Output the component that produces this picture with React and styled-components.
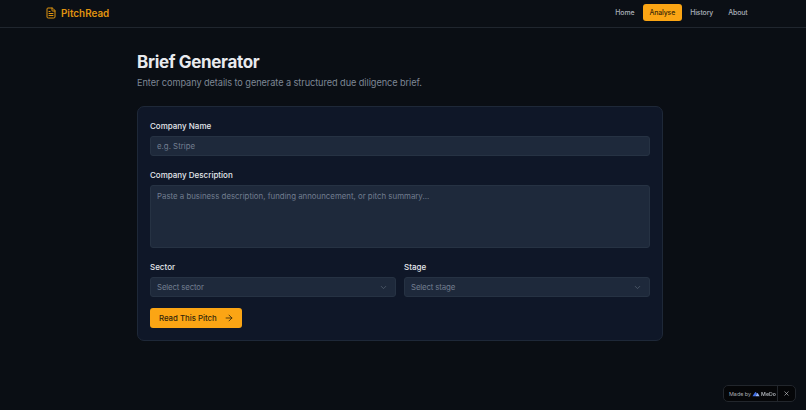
import React from "react";
import styled, { createGlobalStyle } from "styled-components";
import { FileText, ChevronDown, ArrowRight, X } from "lucide-react";

const GlobalStyle = createGlobalStyle`
  html, body {
    margin: 0;
    padding: 0;
    background: #0a0e14;
    font-family: Inter, "Noto Sans", sans-serif;
  }
  * { box-sizing: border-box; }
`;

const Page = styled.div`
  width: 806px;
  height: 410px;
  overflow: hidden;
  background: #0a0e14;
`;

const Header = styled.header`
  height: 28px;
  padding: 0 52px 2px 45px;
  display: flex;
  align-items: center;
  justify-content: space-between;
  background: #0b0f15;
  border-bottom: 1px solid #20262e;
`;

const Brand = styled.div`
  display: flex;
  align-items: center;
  gap: 4px;
  color: #e0940f;
  font-size: 9.9px;
  font-weight: 600;
`;

const Nav = styled.nav`
  display: flex;
  align-items: center;
  gap: 2px;
`;

const NavItem = styled.a`
  height: 17px;
  padding: 0 6.5px;
  display: flex;
  align-items: center;
  border-radius: 3px;
  font-size: 6.9px;
  font-weight: 500;
  letter-spacing: -0.1px;
  color: ${(p) => (p.$active ? "#3b2a08" : "#aab0ba")};
  background: ${(p) => (p.$active ? "#fba514" : "transparent")};
`;

const Main = styled.main`
  width: 526px;
  margin-left: 137px;
  padding-top: 22px;
`;

const Title = styled.h1`
  margin: 0;
  font-size: 17px;
  line-height: 24px;
  font-weight: 700;
  letter-spacing: -0.33px;
  color: #e8eaee;
`;

const Subtitle = styled.p`
  margin: 2px 0 0;
  font-size: 9.2px;
  line-height: 14px;
  letter-spacing: -0.07px;
  color: #7e8794;
`;

const Card = styled.section`
  margin-top: 16px;
  height: 235px;
  padding: 13px 12px;
  background: #0f1728;
  border: 1px solid #1e2838;
  border-radius: 7px;
`;

const Field = styled.div`
  margin-bottom: ${(p) => p.$gap ?? 13}px;
`;

const Label = styled.label`
  display: block;
  height: 12px;
  margin-bottom: 4px;
  font-size: 8px;
  line-height: 12px;
  font-weight: 500;
  color: #e4e7ec;
`;

const fieldStyles = `
  width: 100%;
  background: #1e293b;
  border: 1px solid #263243;
  border-radius: 3px;
  font-family: Inter, "Noto Sans", sans-serif;
  font-size: 7.85px;
  color: #717d8f;
  outline: none;
  &::placeholder { color: #717d8f; opacity: 1; }
`;

const TextInput = styled.input`
  ${fieldStyles}
  display: block;
  height: 20px;
  padding: 0 6px;
`;

const TextArea = styled.textarea`
  ${fieldStyles}
  display: block;
  height: 63px;
  padding: 5px 6px;
  resize: none;
`;

const Row = styled.div`
  display: grid;
  grid-template-columns: 1fr 1fr;
  gap: 8px;
`;

const SelectBox = styled.div`
  ${fieldStyles}
  height: 20px;
  padding: 0 7px 0 6px;
  display: flex;
  align-items: center;
  justify-content: space-between;
  letter-spacing: -0.15px;
`;

const Chevron = styled(ChevronDown)`
  color: #566172;
`;

const SubmitButton = styled.button`
  width: 92px;
  height: 20px;
  padding: 0 0 0 9px;
  display: flex;
  align-items: center;
  gap: 7px;
  border: none;
  border-radius: 3px;
  background: #fba514;
  color: #33260a;
  font-family: Inter, "Noto Sans", sans-serif;
  font-size: 7.8px;
  font-weight: 500;
`;

const Badge = styled.div`
  position: fixed;
  right: 10px;
  bottom: 8px;
  width: 73px;
  height: 17px;
  display: flex;
  align-items: center;
  background: #050608;
  border: 1px solid #22262c;
  border-radius: 5px;
  color: #a9adb3;
  font-size: 5.4px;
  white-space: nowrap;
`;

const BadgeLabel = styled.div`
  flex: 1;
  height: 100%;
  padding-left: 5px;
  display: flex;
  align-items: center;
  gap: 1px;
  border-right: 1px solid #22262c;
`;

const BadgeBrand = styled.span`
  font-size: 5.2px;
  font-weight: 600;
`;

const BadgeClose = styled.div`
  width: 17px;
  display: flex;
  justify-content: center;
  color: #d5d7da;
`;

export default function App() {
  return (
    <Page>
      <GlobalStyle />
      <Header>
        <Brand>
          <FileText size={12} strokeWidth={2} />
          PitchRead
        </Brand>
        <Nav>
          <NavItem>Home</NavItem>
          <NavItem $active>Analyse</NavItem>
          <NavItem>History</NavItem>
          <NavItem>About</NavItem>
        </Nav>
      </Header>
      <Main>
        <Title>Brief Generator</Title>
        <Subtitle>Enter company details to generate a structured due diligence brief.</Subtitle>
        <Card>
          <Field>
            <Label>Company Name</Label>
            <TextInput placeholder="e.g. Stripe" />
          </Field>
          <Field>
            <Label>Company Description</Label>
            <TextArea placeholder="Paste a business description, funding announcement, or pitch summary..." />
          </Field>
          <Row>
            <Field $gap={11}>
              <Label>Sector</Label>
              <SelectBox>
                Select sector
                <Chevron size={9} />
              </SelectBox>
            </Field>
            <Field $gap={11}>
              <Label>Stage</Label>
              <SelectBox>
                Select stage
                <Chevron size={9} />
              </SelectBox>
            </Field>
          </Row>
          <SubmitButton>
            Read This Pitch
            <ArrowRight size={10} strokeWidth={2} />
          </SubmitButton>
        </Card>
      </Main>
      <Badge>
        <BadgeLabel>
          Made by
          <svg width="8" height="6" viewBox="0 0 18 12">
            <path d="M1 11 L7 2 Q8 1 9 2 L11 5 L8 11 Z" fill="#3f6ee8" />
            <path d="M8 11 L11 5 Q12 3 13.500 5 L17 11 Z" fill="#9db8f5" />
          </svg>
          <BadgeBrand>MeDo</BadgeBrand>
        </BadgeLabel>
        <BadgeClose>
          <X size={7} strokeWidth={2} />
        </BadgeClose>
      </Badge>
    </Page>
  );
}
